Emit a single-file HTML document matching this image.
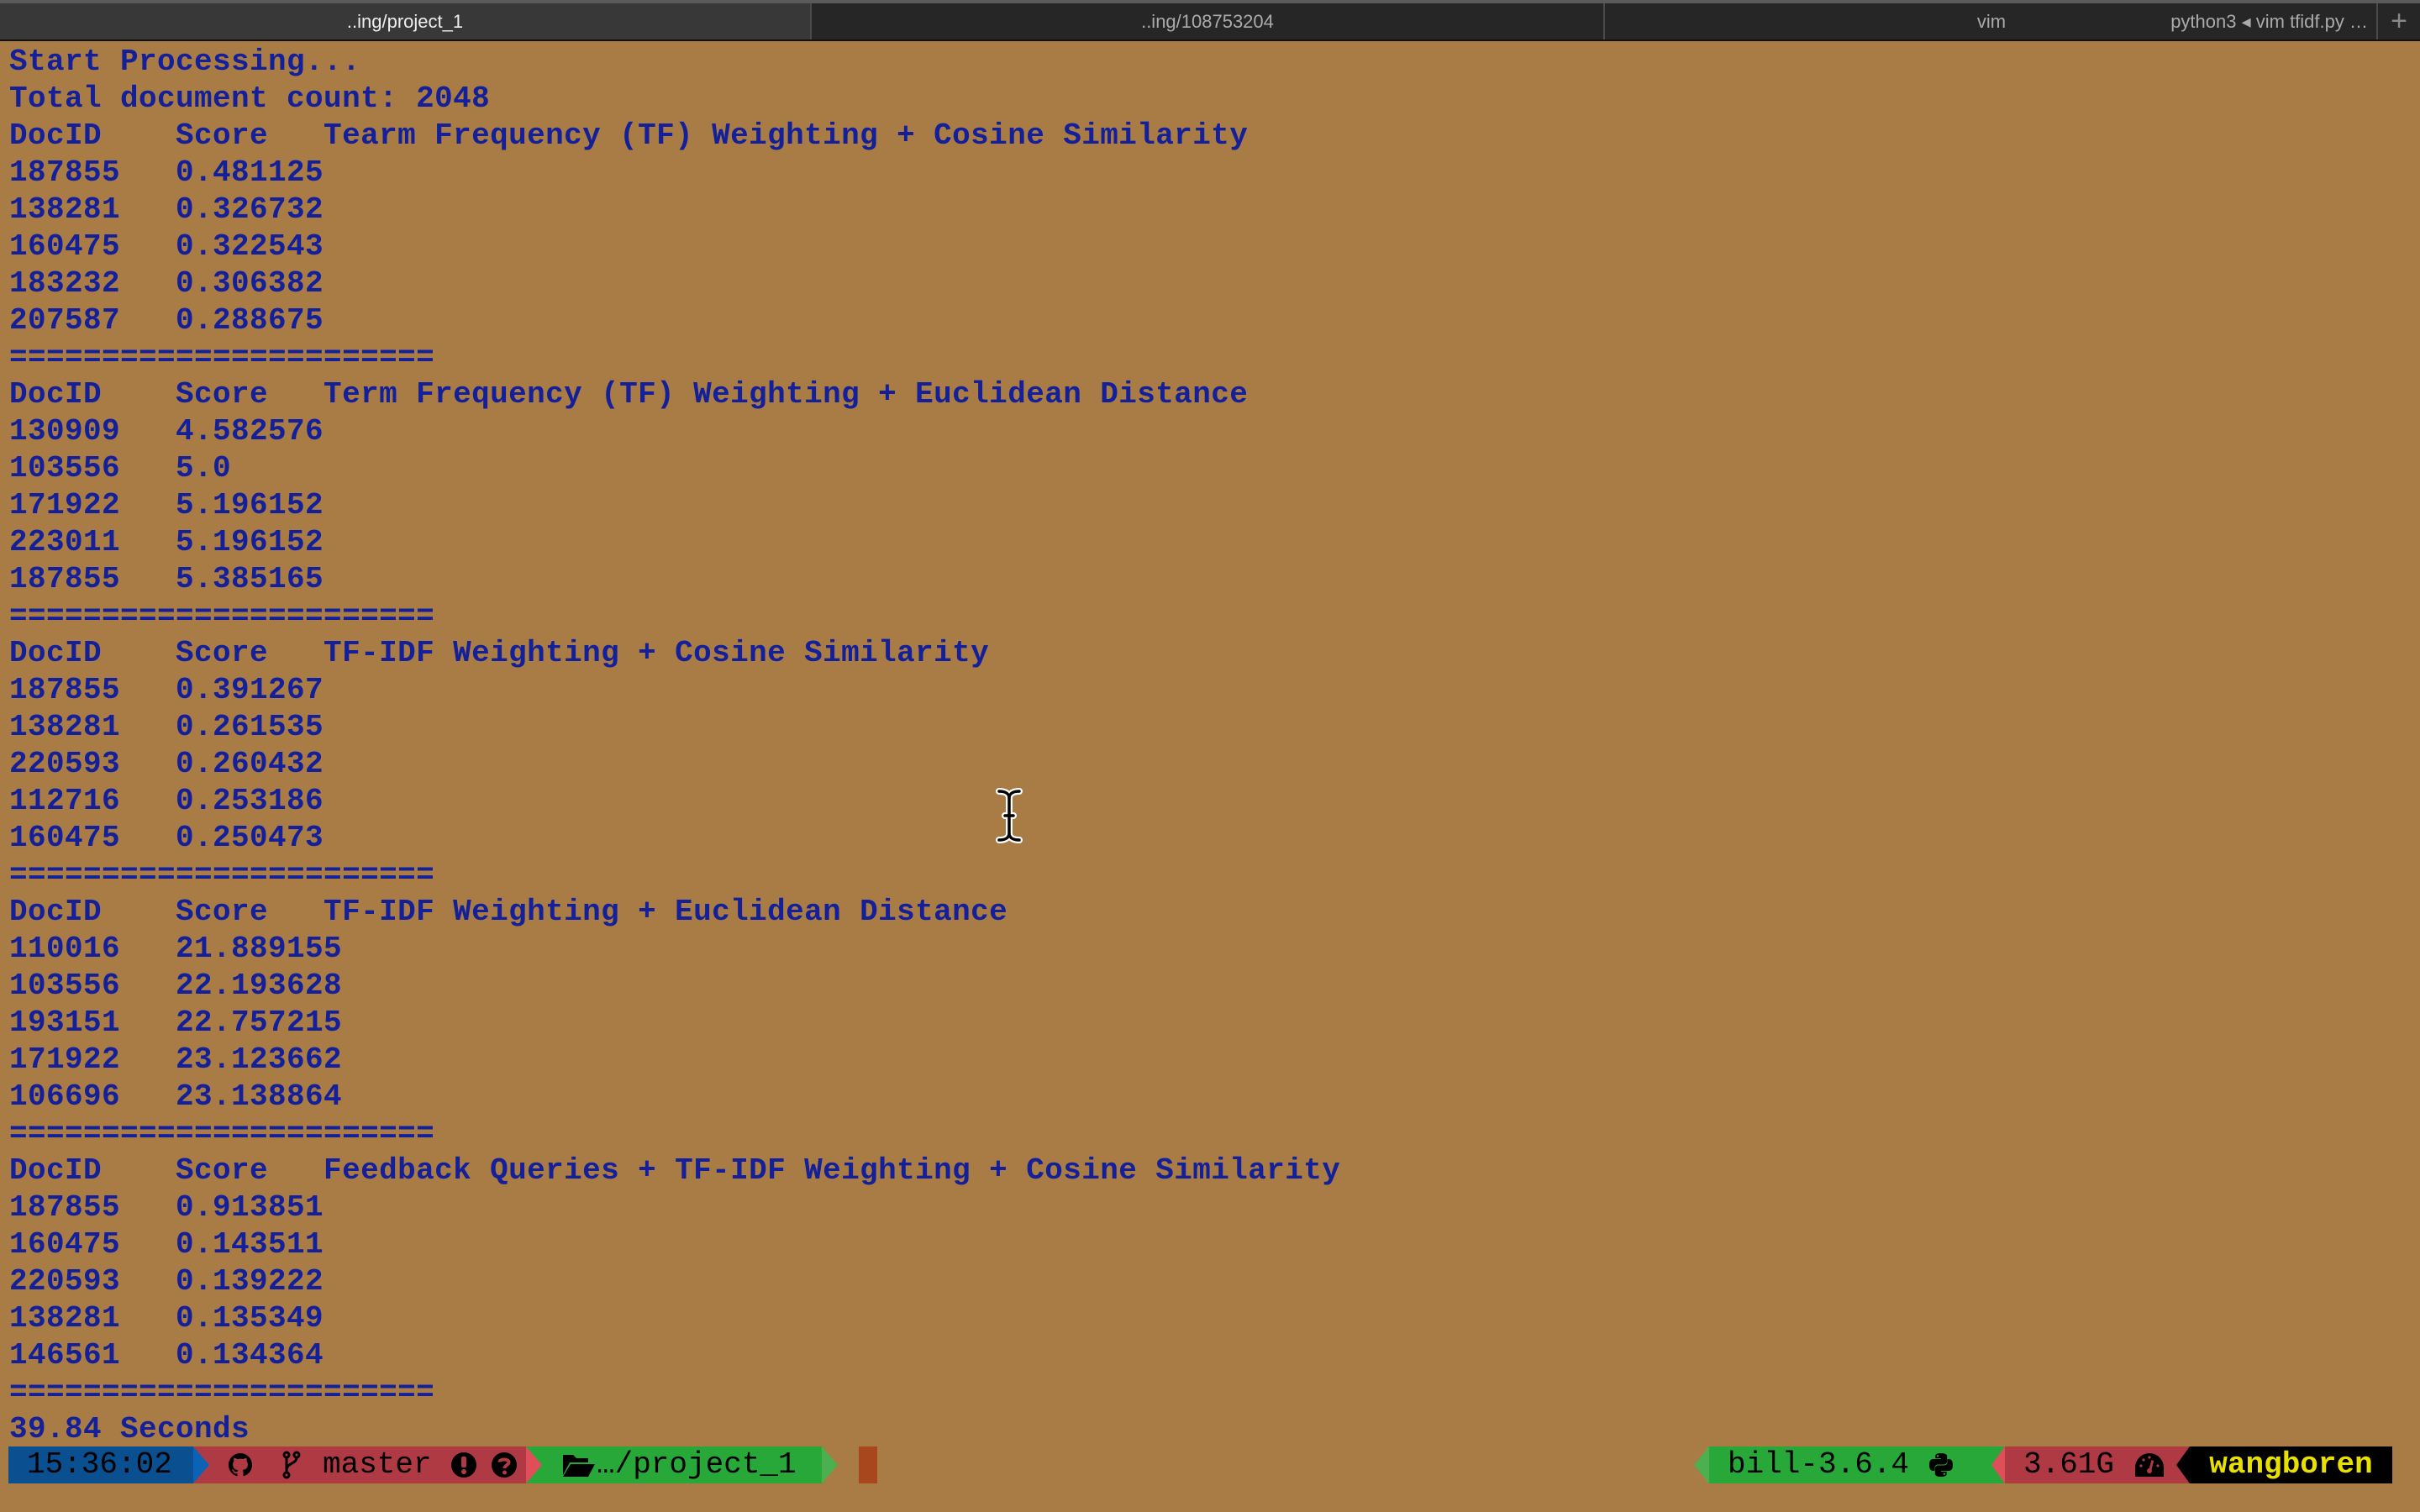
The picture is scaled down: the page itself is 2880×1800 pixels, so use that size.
<!DOCTYPE html>
<html><head><meta charset="utf-8"><style>
*{margin:0;padding:0;box-sizing:border-box}
html,body{width:2880px;height:1800px;overflow:hidden;background:#a97b45}
.tabs{position:absolute;left:0;top:0;width:2880px;height:49px;background:#262626;border-top:4px solid #5a5a5a;border-bottom:2px solid #111}
.tab{position:absolute;top:0;height:43px;line-height:43px;text-align:center;font-family:"Liberation Sans",sans-serif;font-size:22px;color:#aaa;border-right:2px solid #4a4a4a}
pre{position:absolute;left:11px;top:52px;font-family:"Liberation Mono",monospace;font-weight:bold;font-size:36px;letter-spacing:0.4px;line-height:44px;color:#13209a}
.sb{position:absolute;top:1722px;height:44px;font-family:"Liberation Mono",monospace;font-size:36px;line-height:44px;color:#000;white-space:pre}
.ar{position:absolute;top:1722px;width:0;height:0;border-top:22px solid transparent;border-bottom:22px solid transparent}
</style></head><body>
<div class="tabs">
<div class="tab" style="left:0;width:966px;background:#383838;color:#eee">..ing/project_1</div>
<div class="tab" style="left:966px;width:944px">..ing/108753204</div>
<div class="tab" style="left:1910px;width:920px"><span style="position:absolute;width:920px;text-align:center;left:0">vim</span><span style="position:absolute;right:10px">python3 ◂ vim tfidf.py …</span></div>
<div class="tab" style="left:2830px;width:50px;border:none;font-size:34px;color:#888">+</div>
</div>
<pre>Start Processing...
Total document count: 2048
DocID    Score   Tearm Frequency (TF) Weighting + Cosine Similarity
187855   0.481125
138281   0.326732
160475   0.322543
183232   0.306382
207587   0.288675
=======================
DocID    Score   Term Frequency (TF) Weighting + Euclidean Distance
130909   4.582576
103556   5.0
171922   5.196152
223011   5.196152
187855   5.385165
=======================
DocID    Score   TF-IDF Weighting + Cosine Similarity
187855   0.391267
138281   0.261535
220593   0.260432
112716   0.253186
160475   0.250473
=======================
DocID    Score   TF-IDF Weighting + Euclidean Distance
110016   21.889155
103556   22.193628
193151   22.757215
171922   23.123662
106696   23.138864
=======================
DocID    Score   Feedback Queries + TF-IDF Weighting + Cosine Similarity
187855   0.913851
160475   0.143511
220593   0.139222
138281   0.135349
146561   0.134364
=======================
39.84 Seconds</pre>
<!-- left status -->
<div class="sb" style="left:10px;width:220px;background:#0a4f8f;padding-left:22px">15:36:02</div>
<div class="sb" style="left:230px;width:396px;background:#b03a44"></div>
<div class="ar" style="left:230px;border-left:19px solid #0a63b5"></div>
<svg style="position:absolute;left:272px;top:1730px" width="28" height="28" viewBox="0 0 16 16"><path fill="#000" d="M8 0C3.6 0 0 3.6 0 8c0 3.5 2.3 6.5 5.5 7.6.4.1.5-.2.5-.4v-1.4c-2.2.5-2.7-1-2.7-1-.4-.9-.9-1.2-.9-1.2-.7-.5.1-.5.1-.5.8.1 1.2.8 1.2.8.7 1.2 1.900.9 2.3.7.1-.5.3-.9.5-1.1-1.8-.2-3.6-.9-3.6-4 0-.9.3-1.600.8-2.1-.1-.2-.4-1 .1-2.1 0 0 .7-.2 2.2.8.6-.2 1.3-.3 2-.3s1.4.1 2 .3c1.5-1 2.2-.8 2.2-.8.4 1.1.2 1.9.1 2.1.5.6.8 1.3.8 2.1 0 3.1-1.9 3.7-3.6 3.9.3.3.5.8.5 1.5v2.2c0 .2.1.5.6.4C13.7 14.5 16 11.5 16 8c0-4.4-3.6-8-8-8z"/></svg>
<svg style="position:absolute;left:336px;top:1727px" width="22" height="34" viewBox="0 0 22 34"><g fill="none" stroke="#000" stroke-width="3"><circle cx="5" cy="5" r="3"/><circle cx="17" cy="5" r="3"/><circle cx="5" cy="29" r="3"/><path d="M5 8v18M17 8c0 8-12 6-12 16"/></g></svg>
<div class="sb" style="left:384px">master</div>
<svg style="position:absolute;left:536px;top:1728px" width="32" height="32" viewBox="0 0 32 32"><circle cx="16" cy="16" r="15" fill="#000"/><rect x="13" y="6" width="6" height="13" rx="2" fill="#b03a44"/><circle cx="16" cy="24" r="3" fill="#b03a44"/></svg>
<svg style="position:absolute;left:584px;top:1728px" width="32" height="32" viewBox="0 0 32 32"><circle cx="16" cy="16" r="15" fill="#000"/><path d="M10.5 12.5c0-4 11-4 11 0 0 4-5 3.5-5 7.5" fill="none" stroke="#b03a44" stroke-width="4"/><circle cx="16.5" cy="25" r="2.5" fill="#b03a44"/></svg>
<div class="sb" style="left:626px;width:352px;background:#29a83a"></div>
<div class="ar" style="left:626px;border-left:19px solid #e04e5a"></div>
<svg style="position:absolute;left:670px;top:1730px" width="38" height="28" viewBox="0 0 38 28"><path d="M0 2h12l4 4h14v5H8L0 26z" fill="#000"/><path d="M9 13h29l-8 15H0z" fill="#000"/></svg>
<div class="sb" style="left:710px">…/project_1</div>
<div class="ar" style="left:978px;border-left:19px solid #4cb050"></div>
<div style="position:absolute;left:1022px;top:1722px;width:22px;height:44px;background:#a8461e"></div>
<!-- right status -->
<div class="ar" style="left:2016px;border-right:18px solid #4cb050"></div>
<div class="sb" style="left:2034px;width:352px;background:#29a83a;padding-left:22px">bill-3.6.4</div>
<svg style="position:absolute;left:2296px;top:1730px" width="28" height="28" viewBox="0 0 16 16"><path fill="#000" d="M7.9 0C4 0 4.2 1.7 4.2 1.7v1.8H8v.5H2.7S0 3.7 0 7.9s2.3 4 2.3 4h1.4V10s-.1-2.3 2.3-2.3h3.9s2.2 0 2.2-2.1V2.1S12.4 0 7.9 0zM5.8 1.2a.7.7 0 110 1.4.7.7 0 010-1.4zM8.1 16c3.9 0 3.7-1.7 3.7-1.7v-1.8H8V12h5.3s2.7.3 2.7-3.9-2.3-4-2.3-4h-1.4V6s.1 2.3-2.3 2.3H6.1s-2.2 0-2.2 2.1v3.5S3.6 16 8.1 16zm2.1-1.2a.7.7 0 110-1.4.7.7 0 010 1.4z"/></svg>
<div class="ar" style="left:2370px;border-right:16px solid #e04e5a"></div>
<div class="sb" style="left:2386px;width:220px;background:#b03a44;padding-left:22px">3.61G</div>
<svg style="position:absolute;left:2540px;top:1728px" width="36" height="32" viewBox="0 0 36 32"><path d="M18 2A17 17 0 001 19v11h34V19A17 17 0 0018 2z" fill="#000"/><g fill="#b03a44"><circle cx="18" cy="23" r="3"/><rect x="17" y="10" width="3" height="13" transform="rotate(15 18 23)"/><circle cx="8" cy="17" r="1.6"/><circle cx="11" cy="10" r="1.6"/><circle cx="18" cy="7" r="1.6"/><circle cx="28" cy="17" r="1.6"/></g></svg>
<div class="ar" style="left:2590px;border-right:16px solid #000"></div>
<div class="sb" style="left:2606px;width:241px;background:#000;color:#e8e000;font-weight:bold;text-align:center">wangboren</div>
<!-- I-beam cursor -->
<svg style="position:absolute;left:1183px;top:936px" width="36" height="70" viewBox="0 0 36 70"><g fill="none" stroke-linecap="round"><path d="M6 6c6 0 12 2 12 8v42c0 6-6 8-12 8M30 6c-6 0-12 2-12 8v42c0 6 6 8 12 8M13 35h10" stroke="#fff" stroke-width="8"/><path d="M6 6c6 0 12 2 12 8v42c0 6-6 8-12 8M30 6c-6 0-12 2-12 8v42c0 6 6 8 12 8M13 35h10" stroke="#000" stroke-width="3.5"/></g></svg>
</body></html>
